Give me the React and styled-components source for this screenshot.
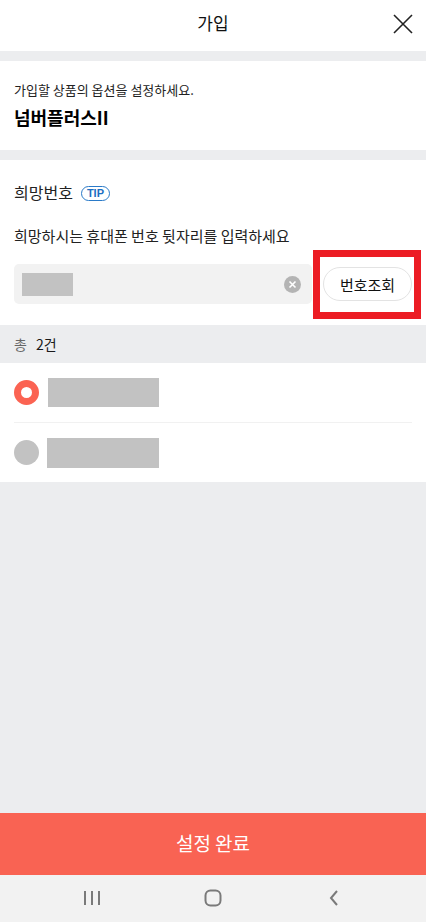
import React from 'react';
import styled, { createGlobalStyle } from 'styled-components';

const Global = createGlobalStyle`
  html, body { margin: 0; padding: 0; }
  body {
    font-family: "Noto Sans CJK KR", "Noto Sans", Roboto, sans-serif;
    color: #111;
    background: #ecedef;
  }
`;

const Page = styled.div`
  width: 426px;
  min-height: 922px;
  display: flex;
  flex-direction: column;
  background: #ecedef;
`;

const Header = styled.header`
  height: 51px;
  background: #fff;
  display: flex;
  align-items: center;
  justify-content: center;
  position: relative;
  margin-bottom: 10px;
`;

const Title = styled.h1`
  margin: 0;
  font-size: 17px;
  font-weight: 400;
  line-height: 24px;
  margin-top: -6px;
`;

const CloseButton = styled.button`
  position: absolute;
  right: 11px;
  top: 12px;
  width: 24px;
  height: 24px;
  padding: 0;
  border: 0;
  background: none;
  display: flex;
`;

const Section = styled.section`
  background: #fff;
  padding: ${p => p.$pad};
  margin-bottom: ${p => p.$gap || 0}px;
`;

const Subtitle = styled.p`
  margin: 0;
  font-size: 13px;
  line-height: 20px;
  color: #222;
`;

const ProductName = styled.h2`
  margin: 4px 0 0;
  font-size: 18px;
  line-height: 26px;
  font-weight: 700;
  color: #000;
`;

const LabelRow = styled.div`
  display: flex;
  align-items: center;
  gap: 8px;
`;

const Label = styled.span`
  font-size: 16px;
  line-height: 24px;
  color: #222;
`;

const TipBadge = styled.span`
  display: inline-flex;
  align-items: center;
  justify-content: center;
  height: 13px;
  padding: 0 5px;
  border: 1.5px solid #2a7ac8;
  border-radius: 9px;
  color: #1d6fc2;
  font-family: "Liberation Sans", Arial, sans-serif;
  font-size: 11px;
  font-weight: 700;
  line-height: 1;
  margin-top: 2px;
`;

const Guide = styled.p`
  margin: 20px 0 16px;
  font-size: 15px;
  line-height: 24px;
  color: #222;
`;

const InputRow = styled.div`
  display: flex;
  align-items: center;
  gap: 11px;
`;

const InputBox = styled.div`
  flex: 1;
  height: 40px;
  border-radius: 5px;
  background: #f2f2f2;
  display: flex;
  align-items: center;
  padding: 0 11px 0 8px;
`;

const Masked = styled.div`
  width: ${p => p.$w}px;
  height: ${p => p.$h}px;
  background: #c2c2c2;
`;

const Spacer = styled.div`
  flex: 1;
`;

const ClearIcon = styled.span`
  width: 17px;
  height: 17px;
  border-radius: 50%;
  background: #b4b4b4;
  display: flex;
  align-items: center;
  justify-content: center;
`;

const LookupWrap = styled.div`
  position: relative;
  display: flex;
`;

const LookupButton = styled.button`
  width: 89px;
  height: 34px;
  border: 1px solid #e3e3e3;
  border-radius: 17px;
  background: #fff;
  font-family: inherit;
  font-size: 15px;
  color: #111;
  padding: 0;
`;

const Highlight = styled.div`
  position: absolute;
  left: -10px;
  right: -9px;
  top: -17px;
  bottom: -18px;
  border: 7px solid #ec1c24;
  pointer-events: none;
`;

const Summary = styled.div`
  height: 38px;
  padding: 0 14px;
  display: flex;
  align-items: center;
  gap: 9px;
  font-size: 14px;
  color: #666;
`;

const Count = styled.span`
  color: #1a1a1a;
`;

const List = styled.ul`
  list-style: none;
  margin: 0;
  padding: 0;
  background: #fff;
`;

const Item = styled.li`
  height: 59px;
  display: flex;
  align-items: center;
  padding: 0 14px;
  gap: 9px;
  & + & {
    border-top: 1px solid #f1f1f1;
    margin: 0 14px;
    padding: 0;
    gap: 8px;
  }
`;

const Radio = styled.span`
  width: 25px;
  height: 25px;
  border-radius: 50%;
  box-sizing: border-box;
  background: ${p => (p.$on ? '#fff' : '#c2c2c2')};
  border: ${p => (p.$on ? '7.5px solid #fb6352' : '0')};
  flex: none;
`;

const Filler = styled.div`
  flex: 1;
`;

const Submit = styled.button`
  height: 62px;
  border: 0;
  background: #f96353;
  color: #fff;
  font-family: inherit;
  font-size: 19px;
  padding: 0 0 4px;
`;

const NavBar = styled.nav`
  height: 47px;
  background: #f2f2f2;
  display: flex;
  align-items: center;
  justify-content: center;
  gap: 97px;
`;

const NavIcon = styled.span`
  width: 24px;
  height: 24px;
  display: flex;
  align-items: center;
  justify-content: center;
  margin-top: -2px;
`;

export default function App() {
  return (
    <Page>
      <Global />
      <Header>
        <Title>가입</Title>
        <CloseButton aria-label="닫기">
          <svg width="24" height="24" viewBox="0 0 24 24">
            <path d="M3 3 L21 21 M21 3 L3 21" stroke="#222" strokeWidth="1.6" fill="none" />
          </svg>
        </CloseButton>
      </Header>

      <Section $pad="19px 14px 20px" $gap={10}>
        <Subtitle>가입할 상품의 옵션을 설정하세요.</Subtitle>
        <ProductName>넘버플러스II</ProductName>
      </Section>

      <Section $pad="20px 14px 21px">
        <LabelRow>
          <Label>희망번호</Label>
          <TipBadge>TIP</TipBadge>
        </LabelRow>
        <Guide>희망하시는 휴대폰 번호 뒷자리를 입력하세요</Guide>
        <InputRow>
          <InputBox>
            <Masked $w={51} $h={23} />
            <Spacer />
            <ClearIcon>
              <svg width="9" height="9" viewBox="0 0 9 9">
                <path d="M1.5 1.5 L7.5 7.5 M7.5 1.5 L1.5 7.5" stroke="#fff" strokeWidth="1.6" />
              </svg>
            </ClearIcon>
          </InputBox>
          <LookupWrap>
            <LookupButton>번호조회</LookupButton>
            <Highlight />
          </LookupWrap>
        </InputRow>
      </Section>

      <Summary>
        총 <Count>2건</Count>
      </Summary>

      <List>
        <Item>
          <Radio $on />
          <Masked $w={111} $h={29} />
        </Item>
        <Item>
          <Radio />
          <Masked $w={112} $h={30} />
        </Item>
      </List>

      <Filler />

      <Submit>설정 완료</Submit>

      <NavBar>
        <NavIcon>
          <svg width="18" height="16" viewBox="0 0 18 16">
            <path d="M2 1 V15 M9 1 V15 M16 1 V15" stroke="#7a7a7a" strokeWidth="2" />
          </svg>
        </NavIcon>
        <NavIcon>
          <svg width="18" height="18" viewBox="0 0 18 18">
            <rect x="1.5" y="1.5" width="15" height="15" rx="5" stroke="#7a7a7a" strokeWidth="2" fill="none" />
          </svg>
        </NavIcon>
        <NavIcon>
          <svg width="12" height="18" viewBox="0 0 12 18">
            <path d="M9 2 L3 9 L9 16" stroke="#7a7a7a" strokeWidth="2" fill="none" />
          </svg>
        </NavIcon>
      </NavBar>
    </Page>
  );
}
